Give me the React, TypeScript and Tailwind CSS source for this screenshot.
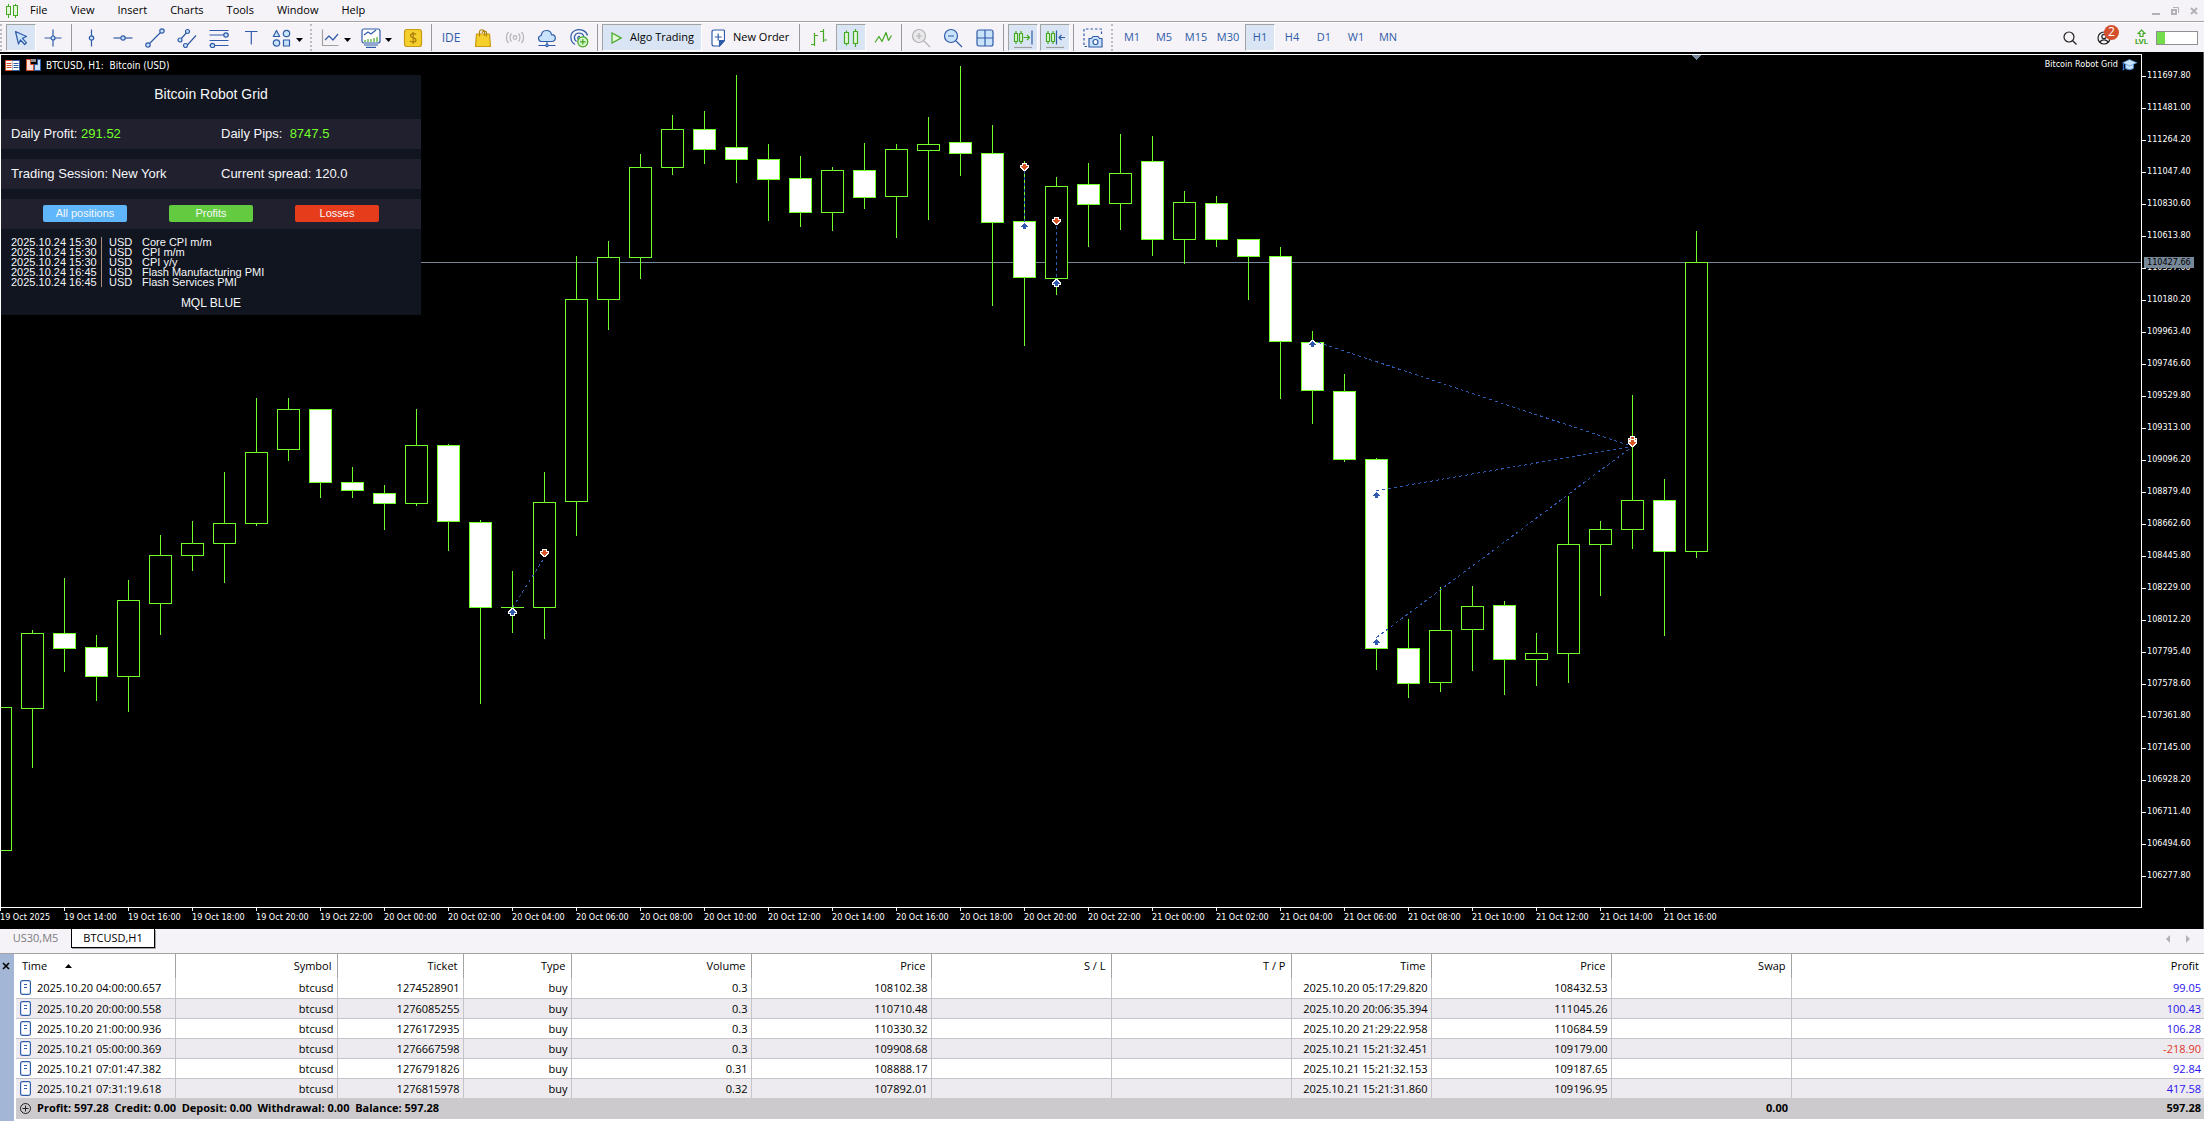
import type { ReactNode } from 'react';
import clsx from 'clsx';

/* ── Chart data ─────────────────────────────────────────────────────── */

// [high, body top, body bottom, low, bearish]
type Candle = [number, number, number, number, (0 | 1)?];

const CANDLE_STEP = 32;
const CANDLE_HALF = 11;

const candles: Candle[] = [
  [707, 707, 850, 850],
  [630, 633, 708, 768],
  [578, 633, 648, 672, 1],
  [635, 647, 676, 701, 1],
  [580, 600, 676, 712],
  [535, 555, 603, 635],
  [521, 543, 555, 571],
  [472, 523, 543, 583],
  [398, 452, 523, 526],
  [398, 409, 449, 461],
  [409, 409, 482, 498, 1],
  [467, 482, 490, 498, 1],
  [485, 493, 503, 530, 1],
  [409, 445, 503, 506],
  [444, 445, 521, 551, 1],
  [520, 522, 607, 704, 1],
  [571, 607, 607, 633],
  [472, 502, 607, 639],
  [256, 299, 501, 536],
  [241, 257, 299, 330],
  [154, 167, 257, 279],
  [115, 129, 167, 175],
  [111, 129, 149, 164, 1],
  [75, 147, 159, 183, 1],
  [144, 159, 179, 221, 1],
  [156, 178, 212, 227, 1],
  [167, 170, 212, 231],
  [143, 170, 197, 209, 1],
  [144, 149, 196, 238],
  [117, 144, 150, 220],
  [66, 142, 153, 176, 1],
  [125, 153, 222, 306, 1],
  [161, 221, 277, 346, 1],
  [177, 186, 278, 295],
  [163, 184, 204, 247, 1],
  [134, 173, 203, 230],
  [136, 161, 239, 256, 1],
  [191, 202, 239, 264],
  [196, 203, 239, 247, 1],
  [239, 239, 256, 300, 1],
  [247, 256, 341, 399, 1],
  [331, 342, 390, 424, 1],
  [374, 391, 459, 462, 1],
  [458, 459, 648, 670, 1],
  [619, 648, 683, 698, 1],
  [587, 630, 682, 692],
  [586, 606, 629, 671],
  [601, 605, 659, 695, 1],
  [633, 653, 659, 686],
  [496, 544, 653, 683],
  [521, 529, 544, 596],
  [395, 500, 529, 549],
  [479, 500, 551, 636, 1],
  [231, 262, 551, 558],
];

const tradeLines = [
  [512, 607, 544, 557],
  [1024, 170, 1024, 223],
  [1056, 225, 1056, 278],
  [1312, 340, 1632, 446],
  [1376, 490, 1632, 446],
  [1376, 637, 1632, 446],
];

const entries = [
  [512, 612],
  [1024, 226],
  [1056, 283],
  [1312, 344],
  [1376, 495],
  [1376, 642],
];

const exits = [
  [544, 552],
  [1024, 166],
  [1056, 220],
  [1632, 439],
  [1632, 442],
];

const prices = Array.from({ length: 26 }, (_, i) => (111697.8 - i * 216.8).toFixed(2));

const times = Array.from({ length: 27 }, (_, i) => {
  if (i === 0) return '19 Oct 2025';
  const hours = 12 + i * 2;
  const day = 19 + Math.floor(hours / 24);
  return `${day} Oct ${String(hours % 24).padStart(2, '0')}:00`;
});

/* ── Table data ─────────────────────────────────────────────────────── */

const columns = ['Time', 'Symbol', 'Ticket', 'Type', 'Volume', 'Price', 'S / L', 'T / P', 'Time', 'Price', 'Swap', 'Profit'];

const deals = [
  ['2025.10.20 04:00:00.657', 'btcusd', '1274528901', 'buy', '0.3', '108102.38', '', '', '2025.10.20 05:17:29.820', '108432.53', '', '99.05'],
  ['2025.10.20 20:00:00.558', 'btcusd', '1276085255', 'buy', '0.3', '110710.48', '', '', '2025.10.20 20:06:35.394', '111045.26', '', '100.43'],
  ['2025.10.20 21:00:00.936', 'btcusd', '1276172935', 'buy', '0.3', '110330.32', '', '', '2025.10.20 21:29:22.958', '110684.59', '', '106.28'],
  ['2025.10.21 05:00:00.369', 'btcusd', '1276667598', 'buy', '0.3', '109908.68', '', '', '2025.10.21 15:21:32.451', '109179.00', '', '-218.90'],
  ['2025.10.21 07:01:47.382', 'btcusd', '1276791826', 'buy', '0.31', '108888.17', '', '', '2025.10.21 15:21:32.153', '109187.65', '', '92.84'],
  ['2025.10.21 07:31:19.618', 'btcusd', '1276815978', 'buy', '0.32', '107892.01', '', '', '2025.10.21 15:21:31.860', '109196.95', '', '417.58'],
];

const news = [
  ['2025.10.24 15:30', 'USD', 'Core CPI m/m'],
  ['2025.10.24 15:30', 'USD', 'CPI m/m'],
  ['2025.10.24 15:30', 'USD', 'CPI y/y'],
  ['2025.10.24 16:45', 'USD', 'Flash Manufacturing PMI'],
  ['2025.10.24 16:45', 'USD', 'Flash Services PMI'],
];

const menus = ['File', 'View', 'Insert', 'Charts', 'Tools', 'Window', 'Help'];
const timeframes = ['M1', 'M5', 'M15', 'M30', 'H1', 'H4', 'D1', 'W1', 'MN'];

/* ── Icons ──────────────────────────────────────────────────────────── */

const BLUE = '#2f5ca8';
const GREEN = '#43a822';
const LIGHT = '#c9e3fb';

function Icon({ children, color = BLUE, w = 20 }: { children: ReactNode; color?: string; w?: number }) {
  return (
    <svg
      width={w}
      height="20"
      viewBox={`0 0 ${w} 20`}
      fill="none"
      stroke={color}
      strokeWidth="1.2"
      strokeLinejoin="round"
      className="shrink-0"
      aria-hidden="true"
    >
      {children}
    </svg>
  );
}

const icons = {
  cursor: <path d="M4.500 3.500l11 5-4 1.800 4 4.500-1.800 1.700-4.200-4.500-2 4z" fill={LIGHT} />,
  cross: (
    <>
      <path d="M10 1.500v17M1.500 10h17" />
      <circle cx="10" cy="10" r="2" fill={LIGHT} />
    </>
  ),
  vline: (
    <>
      <path d="M10.500 1.500v17" />
      <circle cx="10.500" cy="10" r="2.200" fill={LIGHT} />
    </>
  ),
  hline: (
    <>
      <path d="M.5 10h19" />
      <circle cx="10" cy="10" r="2.200" fill={LIGHT} />
    </>
  ),
  trend: (
    <>
      <path d="M3 17L17 3" />
      <circle cx="3" cy="17" r="2.200" fill={LIGHT} />
      <circle cx="17" cy="3" r="2.200" fill={LIGHT} />
    </>
  ),
  channel: (
    <>
      <path d="M3 12l8-9M9 18.500l10-11" />
      <circle cx="3" cy="12" r="2" fill={LIGHT} />
      <circle cx="10.500" cy="3.500" r="2" fill={LIGHT} />
      <circle cx="8.500" cy="17.500" r="2" fill={LIGHT} />
    </>
  ),
  fibo: (
    <>
      <path d="M.5 2.500h19M.5 7h19M.5 12.500h19M.5 17.500h19" />
      <circle cx="17" cy="7" r="2.200" fill={LIGHT} />
      <circle cx="3.500" cy="17.500" r="2.200" fill={LIGHT} />
    </>
  ),
  text: <path d="M4 3.500h12.500M10.300 3.500v13" />,
  shapes: (
    <>
      <path d="M4.500 2.500l3.200 6H1.300z" fill={LIGHT} />
      <circle cx="14.500" cy="5.500" r="3.200" fill={LIGHT} />
      <circle cx="4.500" cy="15" r="3.200" fill={LIGHT} />
      <rect x="11.500" y="12" width="6" height="6" fill={LIGHT} />
    </>
  ),
  line: (
    <>
      <path d="M2.500 1.500v16h16" stroke="#a0a0a0" />
      <path d="M5 12l4-4 4 4 5-6" />
    </>
  ),
  indicators: (
    <>
      <rect x="1" y="1" width="18" height="14" rx="2" fill="#fff" />
      <path d="M3 17h14M5 19.300h10" />
      <path d="M3 7l4-3 3 2 5-4" />
      <path d="M4 14v-2M7 14v-3M10 14v-3M13 14v-4M16 14v-5" stroke={GREEN} />
    </>
  ),
  dollar: (
    <>
      <rect x="1.500" y="1.500" width="17" height="17" rx="2.500" fill="#f5cf2b" stroke="#c99a14" />
      <path d="M13 6.500c-.8-1-5.500-1.700-5.500 1.200 0 2.700 5.500 1.500 5.500 4.200 0 3-5 2.300-6 1M10.200 4v12" stroke="#a97c0c" />
    </>
  ),
  bag: (
    <>
      <path d="M3.500 6h13l1 12.500h-15z" fill="#f5cf2b" stroke="#c99a14" />
      <path d="M6.500 8.500V4c0-3 5-3 5 0v4M9 5c.5-2.500 4.500-2.500 4.500 0v3.500" stroke="#b3860f" />
    </>
  ),
  signal: (
    <g stroke="#b4b2b6">
      <circle cx="10" cy="9.500" r="1.800" />
      <path d="M6.500 5.500c-2 2.200-2 5.800 0 8M13.500 5.500c2 2.200 2 5.800 0 8M3.500 4c-2.800 3-2.800 8 0 11M16.500 4c2.800 3 2.800 8 0 11" />
    </g>
  ),
  cloud: (
    <>
      <path d="M5 13.500c-4.500 0-4.500-5.500-.7-6 .5-6.500 9.500-6.500 10.200-.8 5 0 5 6.800.5 6.800z" fill={LIGHT} />
      <path d="M10 13.500v3.500M1.500 17.500h17" />
      <circle cx="10" cy="17.500" r="1.200" fill={LIGHT} />
    </>
  ),
  network: (
    <>
      <path d="M6 16.500C.5 13 .5 5 6 2.500s11.500.5 12.500 5M7.500 13.500c-3.500-2.500-2.500-8 2-8.500 3 0 5 1.500 5.500 4M9.500 11.500c-1.500-1.500-.5-3.500 1.500-3" />
      <circle cx="13.800" cy="13.800" r="5" fill="#d9f7cf" stroke={GREEN} />
      <path d="M13.800 11v5.600M11 13.800h5.600" stroke={GREEN} />
    </>
  ),
  bars: (
    <g stroke={GREEN}>
      <path d="M5.500 5v13M2 16.500h3.500M5.500 7.500H9" />
      <path d="M14.500 1v13M11 3.500h3.500M14.500 12h3.500" />
    </g>
  ),
  candles: (
    <g stroke={GREEN}>
      <path d="M5.500 2.500v15M14.500 1v18" />
      <rect x="3.500" y="4.500" width="4" height="11" fill="#e2f8d8" />
      <rect x="12.500" y="3.500" width="4" height="12" fill="#e2f8d8" />
    </g>
  ),
  zigzag: <path d="M2 14.500l4-6 3 5 4-9 2.500 8 3-5" stroke={GREEN} />,
  zoomIn: (
    <g stroke="#b4b2b6">
      <circle cx="8" cy="8" r="6.500" fill="#e9e8ea" />
      <path d="M13 13l6 6M8 5v6M5 8h6" />
    </g>
  ),
  zoomOut: (
    <>
      <circle cx="8" cy="8" r="6.500" fill={LIGHT} />
      <path d="M13 13l6 6M5 8h6" />
    </>
  ),
  grid: (
    <>
      <rect x="2" y="2" width="16" height="16" rx="2" fill={LIGHT} />
      <path d="M10 2v16M2 10h16" />
    </>
  ),
  shift: (
    <>
      <path d="M3 3v13M8 3v13M10.500 9.500h6M14 7l2.500 2.500L14 12" stroke={GREEN} />
      <path d="M1.500 5.500h3v8h-3zM6.500 5.500h3v8h-3z" stroke={GREEN} fill="#e2f8d8" />
      <path d="M19 2.500v14" />
      <path d="M1 19.500h18" stroke="#a0a0a0" />
    </>
  ),
  autoScroll: (
    <>
      <path d="M3 3v13M8 3v13" stroke={GREEN} />
      <path d="M1.500 5.500h3v8h-3zM6.500 5.500h3v8h-3z" stroke={GREEN} fill="#e2f8d8" />
      <path d="M11.500 2.500v14M14 9.500h6M16.500 7L14 9.500l2.500 2.500" />
      <path d="M1 19.500h18" stroke="#a0a0a0" />
    </>
  ),
  camera: (
    <>
      <path d="M4 18.500H1V1h17.500v6" strokeDasharray="2.500 2" />
      <path d="M6 10.500h2.500L10 8.500h5l1.500 2H19v8.500H6z" fill={LIGHT} />
      <circle cx="12.500" cy="14" r="2.500" fill="#fff" />
    </>
  ),
};

/* ── Toolbar pieces ─────────────────────────────────────────────────── */

function Tool({ label, active, caret, children }: { label: string; active?: boolean; caret?: boolean; children: ReactNode }) {
  return (
    <button
      type="button"
      aria-label={label}
      className={clsx(
        'mx-px flex h-full shrink-0 items-center justify-center border',
        caret ? 'w-[39px] gap-1' : 'w-[30px]',
        active ? 'border-[#fff] border-l-[#a3a3a3] border-t-[#a3a3a3] bg-[#d9e5f5]' : 'border-transparent',
      )}
    >
      {children}
      {caret && (
        <svg width="7" height="4" viewBox="0 0 7 4" className="mt-1 shrink-0" aria-hidden="true">
          <path d="M0 0h7L3.500 4z" fill="#000" />
        </svg>
      )}
    </button>
  );
}

const Divider = () => <span className="ml-0.5 mr-[3px] h-full w-px shrink-0 bg-[#9a9a9a]" />;

const Grip = () => <span className="ml-0.5 mr-[3px] h-full w-0.5 shrink-0 border-l-2 border-dotted border-[#bdbbbf]" />;

function Toolbar() {
  return (
    <div className="flex h-[30px] items-stretch border-t border-white bg-[#f5f3f7] py-px text-[#2f5ca8]">
      <span className="mr-[3px] h-full w-0.5 shrink-0 border-l-2 border-dotted border-[#bdbbbf]" />
      <Tool label="Cursor" active><Icon>{icons.cursor}</Icon></Tool>
      <Tool label="Crosshair"><Icon>{icons.cross}</Icon></Tool>
      <Divider />
      <Tool label="Vertical line"><Icon>{icons.vline}</Icon></Tool>
      <Tool label="Horizontal line"><Icon>{icons.hline}</Icon></Tool>
      <Tool label="Trendline"><Icon>{icons.trend}</Icon></Tool>
      <Tool label="Equidistant channel"><Icon>{icons.channel}</Icon></Tool>
      <Tool label="Fibonacci retracement"><Icon>{icons.fibo}</Icon></Tool>
      <Tool label="Text"><Icon>{icons.text}</Icon></Tool>
      <Tool label="Shapes" caret><Icon>{icons.shapes}</Icon></Tool>
      <Grip />
      <Tool label="Line studies" caret><Icon>{icons.line}</Icon></Tool>
      <Tool label="Indicators" caret><Icon>{icons.indicators}</Icon></Tool>
      <Tool label="Deposit"><Icon>{icons.dollar}</Icon></Tool>
      <Divider />
      <Tool label="IDE"><span className="text-xs">IDE</span></Tool>
      <Tool label="Market"><Icon>{icons.bag}</Icon></Tool>
      <Tool label="Signals"><Icon>{icons.signal}</Icon></Tool>
      <Tool label="VPS"><Icon>{icons.cloud}</Icon></Tool>
      <Tool label="Network"><Icon>{icons.network}</Icon></Tool>
      <Divider />
      <button
        type="button"
        className="mx-px flex w-[100px] shrink-0 items-center gap-2 border border-white border-l-[#a3a3a3] border-t-[#a3a3a3] bg-[#d9e5f5] pl-2 text-black"
      >
        <svg width="11" height="12" viewBox="0 0 11 12" aria-hidden="true">
          <path d="M1 1l9 5-9 5z" fill="#e2f8d8" stroke={GREEN} strokeWidth="1.200" />
        </svg>
        Algo Trading
      </button>
      <button type="button" className="flex w-[94px] shrink-0 items-center gap-2 pl-2 text-black">
        <svg width="14" height="18" viewBox="0 0 14 18" fill="none" stroke={BLUE} strokeWidth="1.200" aria-hidden="true">
          <path d="M3 1h9.500q1 0 1 1v9.500L8.500 17H3q-2 0-2-2V3q0-2 2-2z" fill="#fff" />
          <path d="M13.500 11.500h-5V17z" fill={BLUE} />
          <path d="M7.200 4.500v7M3.700 8h7" />
        </svg>
        New Order
      </button>
      <Divider />
      <Tool label="Bar chart"><Icon>{icons.bars}</Icon></Tool>
      <Tool label="Candlesticks" active><Icon>{icons.candles}</Icon></Tool>
      <Tool label="Line chart"><Icon>{icons.zigzag}</Icon></Tool>
      <Divider />
      <Tool label="Zoom in"><Icon>{icons.zoomIn}</Icon></Tool>
      <Tool label="Zoom out"><Icon>{icons.zoomOut}</Icon></Tool>
      <Tool label="Tile windows"><Icon>{icons.grid}</Icon></Tool>
      <Divider />
      <Tool label="Auto scroll" active><Icon>{icons.shift}</Icon></Tool>
      <Tool label="Chart shift" active><Icon>{icons.autoScroll}</Icon></Tool>
      <Divider />
      <Tool label="Screenshot"><Icon>{icons.camera}</Icon></Tool>
      <Grip />
      {timeframes.map((tf) => (
        <Tool key={tf} label={tf} active={tf === 'H1'}>{tf}</Tool>
      ))}

      <div className="ml-auto flex items-center gap-5 pr-1.5">
        <button type="button" aria-label="Search">
          <svg width="14" height="14" viewBox="0 0 14 14" fill="none" stroke="#222" strokeWidth="1.200">
            <circle cx="6" cy="6" r="5" />
            <path d="M9.500 9.500l4 4" />
          </svg>
        </button>
        <button type="button" aria-label="Notifications" className="relative mr-1">
          <svg width="14" height="14" viewBox="0 0 14 14" fill="none" stroke="#222" strokeWidth="1.200">
            <circle cx="7" cy="7" r="6" />
            <circle cx="7" cy="5.500" r="2.200" />
            <path d="M3 11.500c1-3.500 7-3.500 8 0" />
          </svg>
          <span className="absolute -right-2 -top-1.5 flex h-[15px] w-[15px] items-center justify-center rounded-full bg-[#d4502c] text-xs leading-none text-white">
            2
          </span>
        </button>
        <div className="flex items-center gap-2">
          <span className="flex flex-col items-center font-[Roboto,sans-serif] text-[8px] font-bold leading-[8px] text-[#43a822]">
            <svg width="9" height="9" viewBox="0 0 9 9" fill="none" stroke={GREEN} strokeWidth="1.200" aria-hidden="true">
              <path d="M4.500 1L8 4.500H6v3H3v-3H1z" />
            </svg>
            LVL
          </span>
          <span className="h-3.5 w-[42px] border border-[#8f8f8f] bg-white">
            <span className="block h-full w-2 bg-[#74dd4c]" />
          </span>
        </div>
      </div>
    </div>
  );
}

function MenuBar() {
  return (
    <header className="flex h-[22px] items-center border-b border-[#a3a3a3] bg-[#f5f3f7] pl-1.5 text-black">
      <svg width="12" height="14" viewBox="0 0 12 14" fill="#e2f8d8" stroke={GREEN} aria-hidden="true">
        <path d="M2.500 0v14M9.500 0v14" />
        <rect x=".5" y="2.500" width="4" height="8" />
        <rect x="7.500" y="1.500" width="4" height="10" />
      </svg>
      <nav className="ml-3 flex gap-[23px]">
        {menus.map((m) => (
          <button type="button" key={m}>{m}</button>
        ))}
      </nav>
      <div className="ml-auto flex gap-[11px] pr-1.5">
        <button type="button" aria-label="Minimize">
          <svg width="8" height="8"><path d="M0 6h8v2H0z" fill="#b3b1b6" /></svg>
        </button>
        <button type="button" aria-label="Restore">
          <svg width="8" height="8" fill="none" stroke="#b3b1b6"><path d="M1 3h4v4H1z" strokeWidth="2" /><path d="M2 .5h5.500V6" /></svg>
        </button>
        <button type="button" aria-label="Close">
          <svg width="8" height="8" stroke="#b3b1b6" strokeWidth="2"><path d="M1 1l6 6M7 1L1 7" /></svg>
        </button>
      </div>
    </header>
  );
}

/* ── Chart ──────────────────────────────────────────────────────────── */

function CandleShape({ data, index }: { data: Candle; index: number }) {
  const [high, top, bottom, low, bearish] = data;
  const x = index * CANDLE_STEP;
  return (
    <g>
      <path d={`M${x + 0.5} ${high}V${top}M${x + 0.5} ${bottom}V${low}`} />
      {top === bottom ? (
        <path d={`M${x - CANDLE_HALF} ${top + 0.5}h${CANDLE_HALF * 2 + 1}`} />
      ) : (
        <rect
          x={x - CANDLE_HALF + 0.5}
          y={top + 0.5}
          width={CANDLE_HALF * 2}
          height={bottom - top}
          fill={bearish ? '#fff' : '#000'}
        />
      )}
    </g>
  );
}

function Plot() {
  return (
    <svg className="absolute inset-0 h-full w-full" role="img" aria-label="BTCUSD H1 candlestick chart" shapeRendering="crispEdges">
      <g transform="translate(-1 -55)">
        <path d="M0 262.500h4000" stroke="#778899" />
        <path d="M1691 55h11l-5.500 5z" fill="#778899" />
        <g stroke="#73ff2b">
          {candles.map((c, i) => (
            <CandleShape key={i} data={c} index={i} />
          ))}
        </g>
        <g stroke="#2f5ab0" strokeDasharray="3 3">
          {tradeLines.map(([x1, y1, x2, y2], i) => (
            <path key={i} d={`M${x1 + 0.5} ${y1 + 0.5}L${x2 + 0.5} ${y2 + 0.5}`} />
          ))}
        </g>
        <g fill="#2f5ab0" stroke="#fff" strokeWidth="2" paintOrder="stroke">
          {entries.map(([x, y], i) => (
            <path key={i} d={`M${x} ${y - 3}h1v1h1v1h1v1h1v1h-2v2h-3v-2h-2v-1h1v-1h1v-1h1z`} />
          ))}
        </g>
        <g fill="#dc5426" stroke="#fff" strokeWidth="2" paintOrder="stroke">
          {exits.map(([x, y], i) => (
            <path key={i} d={`M${x} ${y + 4}h1v-1h1v-1h1v-1h1v-1h-2v-2h-3v2h-2v1h1v1h1v1h1z`} />
          ))}
        </g>
      </g>
    </svg>
  );
}

function RobotPanel() {
  return (
    <section className="absolute left-0 top-5 w-[420px] bg-[#10151f] font-['Liberation_Sans',Arial,sans-serif] text-[13px] text-[#f6f7f9]">
      <h2 className="flex h-11 items-center justify-center pb-1.5 text-[14px]">Bitcoin Robot Grid</h2>
      <div className="flex h-[30px] items-center whitespace-pre bg-[#21202e] px-2.5">
        <p className="w-[210px]">Daily Profit: <span className="text-[#73ff2b]">291.52</span></p>
        <p>Daily Pips:  <span className="text-[#73ff2b]">8747.5</span></p>
      </div>
      <div className="mt-2.5 flex h-[30px] items-center bg-[#21202e] px-2.5">
        <p className="w-[210px]">Trading Session: New York</p>
        <p>Current spread: 120.0</p>
      </div>
      <div className="mt-2.5 flex h-[30px] items-center justify-center gap-[42px] bg-[#21202e] pb-px text-[11px] leading-[17px]">
        <button type="button" className="w-[84px] rounded-[2px] bg-[#5fb6fb]">All positions</button>
        <button type="button" className="w-[84px] rounded-[2px] bg-[#63cb40]">Profits</button>
        <button type="button" className="w-[84px] rounded-[2px] bg-[#e73c1c]">Losses</button>
      </div>
      <ul className="px-2.5 pt-2 text-[11px] leading-[10px]">
        {news.map(([time, currency, title], i) => (
          <li key={i} className="flex">
            <span className="w-[90px]">{time}</span>
            <span className="w-2 border-l border-[#a98d7c]" />
            <span className="w-[33px]">{currency}</span>
            <span>{title}</span>
          </li>
        ))}
      </ul>
      <p className="pb-1 pt-2 text-center text-xs leading-4">MQL BLUE</p>
    </section>
  );
}

function Chart() {
  return (
    <main className="flex flex-1 flex-col border-r border-[#55545a] bg-black pt-0.5 font-['DejaVu_Sans_Condensed',Tahoma,sans-serif] text-[9px] text-white">
      <div className="flex flex-1">
        <div className="relative flex-1 overflow-hidden border border-white">
          <Plot />
          <div className="relative flex h-5 items-center px-1">
            <svg width="15" height="11" viewBox="0 0 15 11" aria-hidden="true">
              <path d="M7.500.5h-7v10h7" fill="#fff" stroke="#d4502c" />
              <path d="M7.500.5h7v10h-7" fill="#fff" stroke="#2f5ca8" />
              <path d="M1.500 3.500h5M1.500 5.500h5M1.500 7.500h5" stroke="#d4502c" />
              <path d="M8.500 3.500h5M8.500 5.500h5M8.500 7.500h5" stroke="#2f5ca8" />
            </svg>
            <svg width="15" height="12" viewBox="0 0 15 12" className="ml-1.5" aria-hidden="true">
              <path d="M.5.5h4v5h3v6h-7z" fill="#fbe0d8" stroke="#d4502c" />
              <path d="M14.500.5h-3v5h-3v6h6z" fill={LIGHT} stroke="#2f5ca8" />
              <path d="M5 0h5v3H5z" fill="#8f8f8f" />
            </svg>
            <h1 className="ml-[5px] whitespace-pre text-[10px]">BTCUSD, H1:  Bitcoin (USD)</h1>
            <span className="ml-auto">Bitcoin Robot Grid</span>
            <svg width="15" height="12" viewBox="0 0 15 12" className="ml-1" aria-hidden="true">
              <path d="M3.500 5v4.500q4 2.500 8 0V5" fill={LIGHT} stroke="#4a86d0" />
              <path d="M7.500.500L15 3.800 7.500 7 .5 3.800z" fill={LIGHT} stroke="#4a86d0" strokeWidth=".6" />
              <path d="M1.500 4v7M.5 10.500h2" stroke="#2f6bc0" strokeWidth="1.400" />
            </svg>
          </div>
          <RobotPanel />
        </div>
        <div className="relative w-[61px] pt-1.5">
          {prices.map((p) => (
            <div key={p} className="flex h-8 items-center gap-px">
              <span className="h-px w-1 bg-white" />
              {p}
            </div>
          ))}
          <span className="absolute left-0.5 top-[203px] bg-[#778899] px-[3px] leading-[11px] text-black">110427.66</span>
        </div>
      </div>
      <div className="flex h-[21px]">
        {times.map((t) => (
          <div key={t} className="w-16 shrink-0 whitespace-nowrap">
            <span className="block h-[3px] w-px bg-white" />
            <span className="leading-3">{t}</span>
          </div>
        ))}
      </div>
    </main>
  );
}

/* ── Bottom part ────────────────────────────────────────────────────── */

function ChartTabs() {
  return (
    <div className="flex h-6 items-start bg-[#f5f3f7]">
      <button type="button" className="h-[18px] w-[71px] text-[#7c7a80]">US30,M5</button>
      <button type="button" className="h-[19px] w-[84px] border border-t-0 border-black bg-white text-black shadow-[1px_1px_0_#a3a3a3]">
        BTCUSD,H1
      </button>
      <div className="ml-auto flex gap-4 pr-3.5 pt-1.5">
        <button type="button" aria-label="Scroll left">
          <svg width="4" height="8"><path d="M4 0v8L0 4z" fill="#b3b1b6" /></svg>
        </button>
        <button type="button" aria-label="Scroll right">
          <svg width="4" height="8"><path d="M0 0v8l4-4z" fill="#b3b1b6" /></svg>
        </button>
      </div>
    </div>
  );
}

function History() {
  return (
    <section className="flex border-t border-[#a3a3a3] bg-white">
      <div className="w-3.5 shrink-0 bg-[#a3b6d6] pt-2 text-center">
        <button type="button" aria-label="Close toolbox" className="block w-3">
          <svg width="8" height="8" className="mx-auto" stroke="#000" strokeWidth="1.600"><path d="M1 1l6 6M7 1L1 7" /></svg>
        </button>
      </div>
      <table className="mb-0.5 ml-0.5 flex-1 table-fixed border-collapse text-right text-black">
        <colgroup>
          <col className="w-[159px]" />
          <col className="w-[162px]" />
          <col className="w-[126px]" />
          <col className="w-[108px]" />
          <col className="w-[180px]" />
          <col className="w-[180px]" />
          <col className="w-[180px]" />
          <col className="w-[180px]" />
          <col className="w-[140px]" />
          <col className="w-[180px]" />
          <col className="w-[180px]" />
          <col />
        </colgroup>
        <thead>
          <tr className="h-6">
            {columns.map((c, i) => (
              <th
                key={i}
                className={clsx(
                  'p-0 font-normal',
                  i === 0 ? 'pl-1.5 text-left' : 'pr-[5px]',
                  i < 11 && 'border-r border-[#a3a3a3]',
                )}
              >
                {c}
                {i === 0 && (
                  <svg width="7" height="4" className="mb-0.5 ml-[18px] inline-block" aria-hidden="true"><path d="M0 4h7L3.500 0z" /></svg>
                )}
              </th>
            ))}
          </tr>
        </thead>
        <tbody>
          {deals.map((row, r) => (
            <tr key={row[2]} className={clsx('h-5', r < 5 && 'border-b border-[#c6c4c8]', r % 2 === 1 && 'bg-[#edebef]')}>
              {row.map((cell, i) => (
                <td
                  key={i}
                  className={clsx(
                    'p-0 leading-[19px]',
                    i === 0 ? 'pl-1 text-left' : 'pr-[3px]',
                    i < 11 && 'border-r border-[#c6c4c8]',
                    i === 11 && (cell.startsWith('-') ? 'text-[#e0362a]' : 'text-[#2a12f0]'),
                  )}
                >
                  {i === 0 ? (
                    <span className="flex items-center gap-1.5">
                      <svg width="11" height="15" viewBox="0 0 11 15" fill="#fff" stroke={BLUE} aria-hidden="true">
                        <rect x=".6" y=".6" width="9.800" height="13.800" rx="1.800" strokeWidth="1.200" />
                        <path d="M4 4.500h3M4 7.500h3" />
                      </svg>
                      {cell}
                    </span>
                  ) : (
                    cell
                  )}
                </td>
              ))}
            </tr>
          ))}
        </tbody>
        <tfoot>
          <tr className="h-[21px] bg-[#cccacd] font-bold">
            <td colSpan={10} className="p-0 pl-1 text-left">
              <span className="flex items-center gap-1.5 whitespace-pre">
                <svg width="11" height="11" viewBox="0 0 11 11" fill="none" stroke="#222" aria-hidden="true">
                  <circle cx="5.500" cy="5.500" r="5" />
                  <path d="M5.500 2.500v6M2.500 5.500h6" />
                </svg>
                Profit: 597.28  Credit: 0.00  Deposit: 0.00  Withdrawal: 0.00  Balance: 597.28
              </span>
            </td>
            <td className="p-0 pr-[3px]">0.00</td>
            <td className="p-0 pr-[3px]">597.28</td>
          </tr>
        </tfoot>
      </table>
    </section>
  );
}

export default function App() {
  return (
    <div className="flex min-h-screen flex-col bg-[#f5f3f7] font-['Open_Sans','Segoe_UI',sans-serif] text-[11px]">
      <MenuBar />
      <Toolbar />
      <Chart />
      <ChartTabs />
      <History />
    </div>
  );
}
